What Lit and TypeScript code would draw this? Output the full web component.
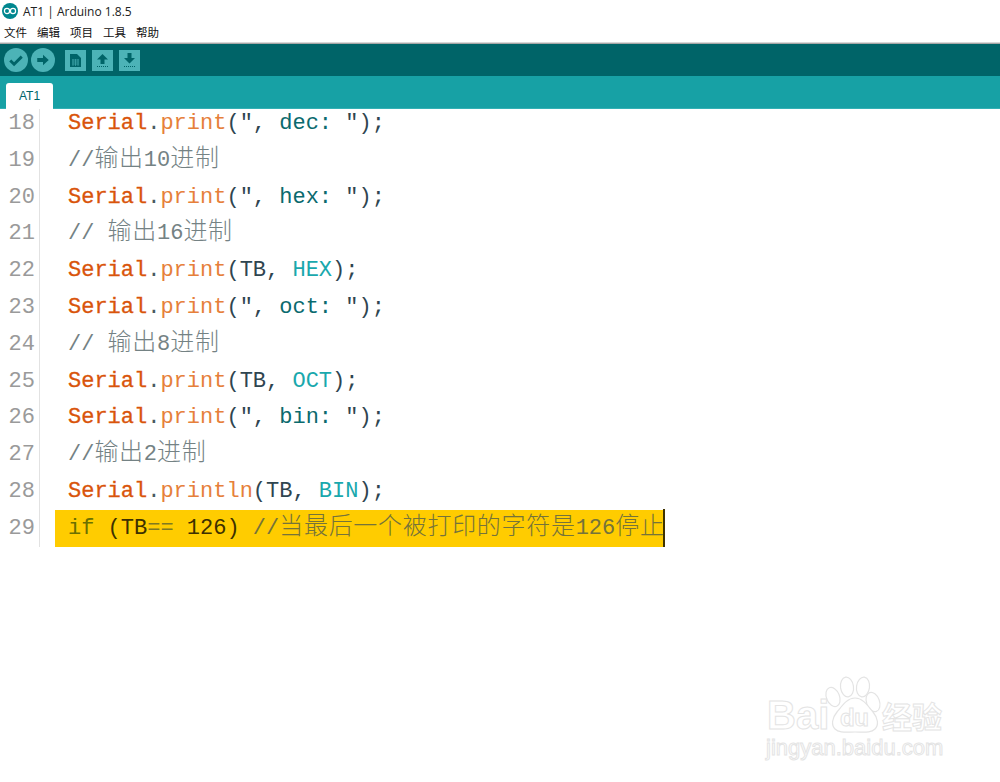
import { LitElement, html, css, svg } from "lit";
import { customElement } from "lit/decorators.js";

type Seg = [string, string];
const S: Seg = ["ser", "Serial"];
const D: Seg = ["pt", "."];
const P: Seg = ["met", "print"];
const str = (t: string): Seg[] => [["tx", "(″,"], ["str", ` ${t}: `], ["tx", "″);"]];
const call = (k: string): Seg[] => [["tx", "(TB, "], ["con", k], ["tx", ");"]];
const c = (...p: string[]): Seg[] =>
  p.map((t) => [/[\u4e00-\u9fff]/.test(t) ? "cjk cm" : "cm", t] as Seg);

const LINES: { n: number; segs: Seg[]; hl?: boolean }[] = [
  { n: 18, segs: [S, D, P, ...str("dec")] },
  { n: 19, segs: c("//", "输出", "10", "进制") },
  { n: 20, segs: [S, D, P, ...str("hex")] },
  { n: 21, segs: c("// ", "输出", "16", "进制") },
  { n: 22, segs: [S, D, P, ...call("HEX")] },
  { n: 23, segs: [S, D, P, ...str("oct")] },
  { n: 24, segs: c("// ", "输出", "8", "进制") },
  { n: 25, segs: [S, D, P, ...call("OCT")] },
  { n: 26, segs: [S, D, P, ...str("bin")] },
  { n: 27, segs: c("//", "输出", "2", "进制") },
  { n: 28, segs: [S, D, ["met", "println"], ...call("BIN")] },
  {
    n: 29,
    hl: true,
    segs: [
      ["kw", "if"],
      ["tx", " (TB"],
      ["op", "=="],
      ["tx", " 126) "],
      ...c("//", "当最后一个被打印的字符是", "126", "停止"),
    ],
  },
];

@customElement("app-root")
export class AppRoot extends LitElement {
  static styles = css`
    :host { display: block; width: 1000px; height: 782px; position: relative; overflow: hidden; background: #fff; }
    .title { display: flex; align-items: center; height: 22px; padding-left: 2px; gap: 5px; font: 12px "Open Sans", sans-serif; color: #222; }
    .title svg { display: block; }
    .menu { display: flex; gap: 10px; height: 20px; align-items: center; padding-left: 4px; font: 11.5px "Noto Sans CJK SC", sans-serif; color: #111; box-sizing: border-box; border-bottom: 1px solid #fff; }
    .rule { height: 2px; background: #a6a6a6; border-top: 1px solid #d8d8d8; box-sizing: border-box; }
    .toolbar { display: flex; align-items: center; height: 32px; background: #006468; padding-left: 4px; box-sizing: border-box; }
    .toolbar svg { display: block; }
    .round { margin-right: 3px; }
    .square { margin-right: 6px; }
    .sq1 { margin-left: 7px; }
    .tabs { height: 33px; background: #17a1a5; border-bottom: 1px solid #33b0b4; box-sizing: border-box; display: flex; align-items: flex-end; padding-left: 6px; }
    .tab { width: 47px; height: 26px; background: #fff; border-radius: 3px 3px 0 0; margin-bottom: -1px; display: flex; align-items: center; justify-content: center; font: 12px "Liberation Sans", sans-serif; color: #006468; }
    .viewport { overflow: hidden; }
    .code { display: grid; grid-template-columns: 40px 1fr; margin-top: -4px; font: 22px/36.8px "Liberation Mono", monospace; }
    .num { text-align: right; padding: 1px 4px 0 0; color: #9a9a9a; border-right: 1px solid #e2e2e2; box-sizing: border-box; height: 36.8px; white-space: pre; }
    .line { height: 36.8px; margin-left: 15px; padding: 1px 0 0 13px; box-sizing: border-box; white-space: pre; }
    .line.hl { background: #ffcc00; width: 608px; position: relative; }
    .hl::after { content: ""; position: absolute; right: -2px; top: -1px; bottom: 0; width: 2px; background: #403300; }
    .ser { color: #d9540b; -webkit-text-stroke: 0.3px #d9540b; }
    .pt { color: #4a5a60; }
    .met { color: #e6803a; }
    .tx { color: #2f4550; }
    .str { color: #0a6a6e; }
    .con { color: #19a8ad; }
    .cm { color: #748284; }
    .cjk { font-family: "Noto Sans CJK SC", sans-serif; font-size: 24px; line-height: 0; font-weight: 300; letter-spacing: 0.7px; }
    .hl .kw { color: #6b7000; }
    .hl .tx { color: #3d3000; }
    .hl .op { color: #7f7a20; }
    .hl .cm { color: #75733a; }
    .mark { position: absolute; left: 766px; top: 672px; width: 180px; height: 94px; pointer-events: none; color: #fff; }
    .mark svg { position: absolute; left: 0; top: 0; }
    .mt { position: absolute; white-space: nowrap; -webkit-text-stroke: 1px #e4e4e4; }
    .bai { left: 1px; top: 19px; font: 700 40px/48px "Liberation Sans", sans-serif; }
    .du { left: 74px; top: 33px; font: 700 24px/26px "Liberation Sans", sans-serif; letter-spacing: -0.5px; }
    .jy { left: 116px; top: 25px; font: 700 30px/36px "Noto Sans CJK SC", sans-serif; letter-spacing: 0; }
    .url { left: 0; top: 64px; font: 400 22px/24px "Liberation Sans", sans-serif; }
  `;

  private toolIcon(kind: string) {
    const inner = {
      doc: svg`<path d="M5 4h7l4 4v9H5z" fill="#006468"/><path d="M7 10h7M7 12h7M7 14h7M8 9v7M10.5 9v7M13 9v7" stroke="#4cb3b7" stroke-width=".6" fill="none"/>`,
      up: svg`<path d="M10.5 4l5.5 5.5h-3.5V14h-4V9.500H5z" fill="#006468"/><path d="M5 16.500h12" stroke="#006468" stroke-dasharray="1 1" fill="none"/>`,
      down: svg`<path d="M10.500 13.500l5.500-5.500h-3.500V3h-4v5H5z" fill="#006468"/><path d="M5 16.500h12" stroke="#006468" stroke-dasharray="1 1" fill="none"/>`,
    }[kind];
    return html`<svg class="square ${kind === "doc" ? "sq1" : ""}" width="21" height="21" viewBox="0 0 21 21"><rect width="21" height="21" fill="#4cb3b7"/>${inner}</svg>`;
  }

  render() {
    return html`
      <div class="title">
        <svg width="16" height="16" viewBox="0 0 16 16">
          <circle cx="8" cy="8" r="8" fill="#00878f"/>
          <circle cx="5" cy="8" r="2.6" fill="none" stroke="#fff" stroke-width="1.2"/>
          <circle cx="11" cy="8" r="2.6" fill="none" stroke="#fff" stroke-width="1.2"/>
        </svg>
        <span>AT1 | Arduino 1.8.5</span>
      </div>
      <div class="menu"><span>文件</span><span>编辑</span><span>项目</span><span>工具</span><span>帮助</span></div>
      <div class="rule"></div>
      <div class="toolbar">
        <svg class="round" width="24" height="24" viewBox="0 0 25 25"><circle cx="12.5" cy="12.5" r="12.5" fill="#4cb3b7"/><path d="M6.5 13l4 4 8-8" fill="none" stroke="#006468" stroke-width="3"/></svg>
        <svg class="round" width="24" height="24" viewBox="0 0 25 25"><circle cx="12.500" cy="12.500" r="12.500" fill="#4cb3b7"/><path d="M6.500 10.500h6V7l6 5.500-6 5.500v-3.500h-6z" fill="#006468"/></svg>
        ${this.toolIcon("doc")}${this.toolIcon("up")}${this.toolIcon("down")}
      </div>
      <div class="tabs"><div class="tab">AT1</div></div>
      <div class="viewport">
        <div class="code">
          ${LINES.map(
            (l) => html`<div class="num">${l.n}</div>
              <div class="line ${l.hl ? "hl" : ""}">${l.segs.map(([k, t]) => html`<span class=${k}>${t}</span>`)}</div>`
          )}
        </div>
      </div>
      <div class="mark">
        <svg width="180" height="94" viewBox="0 0 180 94" fill="#fff" stroke="#e4e4e4" stroke-width="1.2">
          <ellipse cx="67" cy="25" rx="6.500" ry="10" transform="rotate(-22 67 25)"/>
          <ellipse cx="81" cy="15" rx="6.500" ry="10" transform="rotate(-8 81 15)"/>
          <ellipse cx="97" cy="15" rx="6.500" ry="10" transform="rotate(8 97 15)"/>
          <ellipse cx="107" cy="30" rx="6.500" ry="10" transform="rotate(-20 107 30)"/>
          <path d="M89 26c8 0 13 8 18 14 5 6 6 13 2 17-4 4-11 3-20 3s-16 1-20-3c-4-4-3-11 2-17 5-6 10-14 18-14z"/>
        </svg>
        <span class="mt bai">Bai</span>
        <span class="mt du">du</span>
        <span class="mt jy">经验</span>
        <span class="mt url">jingyan.baidu.com</span>
      </div>
    `;
  }
}
